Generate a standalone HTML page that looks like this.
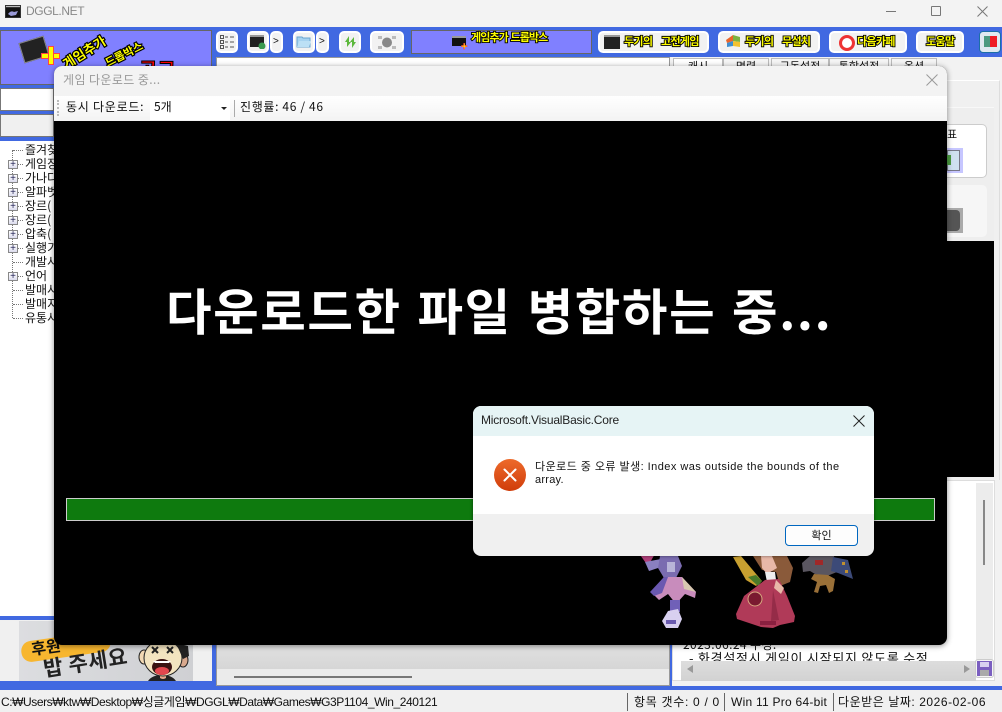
<!DOCTYPE html>
<html><head><meta charset="utf-8"><style>
*{box-sizing:border-box}
html,body{margin:0;padding:0;width:1002px;height:712px;overflow:hidden;background:#f0f0f0}
body{font-family:"Liberation Sans","Noto Sans CJK KR",sans-serif;font-size:12px;color:#111;position:relative}
.a{position:absolute}
.t{position:absolute;white-space:nowrap;line-height:1}
.btn{position:absolute;background:#f2f2f2;border:2px solid #fff;border-radius:5px;height:22px;top:31px}
.yl{position:absolute;white-space:nowrap;font-weight:bold;color:#ff0;font-size:11px;letter-spacing:-.7px;line-height:1;-webkit-text-stroke:1.8px #000;paint-order:stroke fill;font-family:"Noto Sans CJK KR",sans-serif}
.tr{position:absolute;left:25px;font-size:12px;line-height:14px;white-space:nowrap;font-family:"Noto Sans CJK KR",sans-serif}
.pl{position:absolute;left:8px;width:10px;height:9px;border:1px solid #888;background:linear-gradient(#fff,#dde);color:#225;font-size:10px;line-height:7px;text-align:center;font-family:"Liberation Sans"}
.dot{position:absolute;border-top:1px dotted #777;height:0}
.tab{position:absolute;top:58px;height:12px;background:#f4f4f4;border:1px solid #bbb;border-bottom:0;font-size:11px;text-align:center;line-height:14px;overflow:hidden;font-family:"Noto Sans CJK KR",sans-serif}
</style></head><body>
<!-- title bar -->
<div class="a" style="left:0;top:0;width:1002px;height:27px;background:#f3f3f3"></div>
<svg class="a" style="left:5px;top:5px" width="17" height="14"><rect width="16" height="13" fill="#333"/><rect x="1" y="3" width="14" height="9" fill="#111"/><path d="M3 9q3-4 6-2l4-1-2 4-5 1z" fill="#9a9ad8"/><rect x="1" y="1" width="14" height="1" fill="#bbb"/></svg>
<div class="t" style="left:26px;top:5px;font-size:12px;letter-spacing:-.4px;color:#888">DGGL.NET</div>
<div class="a" style="left:886px;top:11px;width:10px;height:1px;background:#777"></div>
<div class="a" style="left:931px;top:6px;width:10px;height:10px;border:1px solid #777;border-radius:1px"></div>
<svg class="a" style="left:977px;top:6px" width="11" height="11"><path d="M.5.5l10 10M10.5.5l-10 10" stroke="#777" fill="none"/></svg>
<!-- blue back -->
<div class="a" style="left:0;top:27px;width:1002px;height:30px;background:#4169e1"></div>
<div class="a" style="left:0;top:57px;width:216px;height:633px;background:#4169e1"></div>
<div class="a" style="left:0;top:686px;width:1002px;height:4px;background:#4169e1"></div>
<div class="a" style="left:670px;top:476px;width:2px;height:214px;background:#4169e1"></div>
<!-- logo -->
<div class="a" style="left:0;top:30px;width:212px;height:55px;background:#8080ff;border:1px solid #666;overflow:hidden">
 <div class="a" style="left:20px;top:8px;width:26px;height:21px;background:#222;border:1px solid #888;transform:rotate(-17deg)"></div>
 <div class="a" style="left:40px;top:22px;width:19px;height:6px;background:#ff0;border:1px solid #f44"></div>
 <div class="a" style="left:47px;top:15px;width:6px;height:19px;background:#ff0;border:1px solid #f44"></div>
 <div class="yl" style="left:59px;top:14px;font-size:13px;letter-spacing:0;-webkit-text-stroke:2.4px #000;transform:rotate(-32deg)">게임추가</div>
 <div class="yl" style="left:103px;top:18px;font-size:11px;letter-spacing:0;-webkit-text-stroke:2.4px #000;transform:rotate(-27deg)">드롭박스</div>
 <div class="t" style="left:138px;top:28px;font-size:20px;font-weight:bold;color:#f00;-webkit-text-stroke:1px #000;font-family:'Noto Sans CJK KR'">공구</div>
</div>
<div class="a" style="left:0;top:88px;width:54px;height:23px;background:#fff;border:1px solid #777"></div>
<div class="a" style="left:0;top:114px;width:54px;height:23px;background:#f0f0f0;border:1px solid #777"></div>
<!-- tree -->
<div class="a" style="left:0;top:141px;width:212px;height:475px;background:#fff"></div>
<div class="a" style="left:12px;top:150px;height:168px;border-left:1px dotted #777"></div>
<div class="tr" style="top:143px">즐겨찾</div><div class="tr" style="top:157px">게임장</div><div class="tr" style="top:171px">가나다</div><div class="tr" style="top:185px">알파벳</div><div class="tr" style="top:199px">장르(</div><div class="tr" style="top:213px">장르(</div><div class="tr" style="top:227px">압축(</div><div class="tr" style="top:241px">실행기</div><div class="tr" style="top:255px">개발사</div><div class="tr" style="top:269px">언어</div><div class="tr" style="top:283px">발매사</div><div class="tr" style="top:297px">발매지</div><div class="tr" style="top:311px">유통사</div>
<div class="dot" style="left:13px;top:150px;width:10px"></div><div class="dot" style="left:18px;top:164px;width:5px"></div><div class="dot" style="left:18px;top:178px;width:5px"></div><div class="dot" style="left:18px;top:192px;width:5px"></div><div class="dot" style="left:18px;top:206px;width:5px"></div><div class="dot" style="left:18px;top:220px;width:5px"></div><div class="dot" style="left:18px;top:234px;width:5px"></div><div class="dot" style="left:18px;top:248px;width:5px"></div><div class="dot" style="left:13px;top:262px;width:10px"></div><div class="dot" style="left:18px;top:276px;width:5px"></div><div class="dot" style="left:13px;top:290px;width:10px"></div><div class="dot" style="left:13px;top:304px;width:10px"></div><div class="dot" style="left:13px;top:318px;width:10px"></div>
<div class="pl" style="top:160px">+</div><div class="pl" style="top:174px">+</div><div class="pl" style="top:188px">+</div><div class="pl" style="top:202px">+</div><div class="pl" style="top:216px">+</div><div class="pl" style="top:230px">+</div><div class="pl" style="top:244px">+</div><div class="pl" style="top:272px">+</div>
<!-- banner -->
<div class="a" style="left:0;top:620px;width:212px;height:61px;background:#f0f0f0"></div>
<div class="a" style="left:19px;top:621px;width:174px;height:60px;background:linear-gradient(90deg,#dcdde0,#cfd0d3)"></div>
<div class="a" style="left:21px;top:636px;width:90px;height:21px;background:#f7b62f;border-radius:10px;transform:rotate(-8deg)"></div>
<div class="t" style="left:31px;top:638px;font-size:16px;font-weight:bold;color:#111;transform:rotate(-8deg);font-family:'Noto Sans CJK KR'">후원</div>
<div class="t" style="left:43px;top:652px;font-size:21px;font-weight:bold;letter-spacing:.6px;color:#222;transform:rotate(-9deg);font-family:'Noto Sans CJK KR'">밥 주세요</div>
<svg class="a" style="left:138px;top:640px" width="56" height="41"><path d="M10 41q4-6 14-6t14 6z" fill="#222"/><path d="M22 38q3 2 6 0v-4h-6z" fill="#e9a98c"/><ellipse cx="6" cy="17" rx="5" ry="7" fill="#f3d9b4" stroke="#222"/><ellipse cx="45" cy="20" rx="5" ry="7" fill="#d9a98e" stroke="#222"/><ellipse cx="25" cy="18" rx="19" ry="18" fill="#f3e4c0" stroke="#222"/><path d="M38 3l12 3 1 10-6 3z" fill="#222"/><ellipse cx="24" cy="27" rx="10" ry="8" fill="#3a1212"/><ellipse cx="24" cy="31" rx="7" ry="4" fill="#e2474e"/><path d="M15 21h18l-2 2H17z" fill="#fff"/><path d="M14 7l6 6m0-6l-6 6M29 7l6 6m0-6l-6 6" stroke="#222" stroke-width="2"/></svg>
<!-- toolbar buttons -->
<div class="btn" style="left:216px;width:22px"></div>
<svg class="a" style="left:220px;top:35px" width="15" height="14" fill="none" stroke="#555"><rect x=".5" y=".5" width="3" height="3"/><rect x=".5" y="5.5" width="3" height="3"/><rect x=".5" y="10.5" width="3" height="3"/><path d="M5 2h3m2 0h4M5 7h3m2 0h4M5 12h3m2 0h4"/></svg>
<div class="btn" style="left:247px;width:22px"></div>
<svg class="a" style="left:250px;top:35px" width="16" height="14"><rect width="14" height="12" fill="#222"/><rect y="0" width="14" height="2" fill="#999"/><circle cx="12" cy="11" r="3.5" fill="#3a9a50"/></svg>
<div class="btn" style="left:270px;width:13px"></div><div class="t" style="left:273px;top:37px;font-size:10px">&gt;</div>
<div class="btn" style="left:293px;width:22px"></div>
<svg class="a" style="left:296px;top:36px" width="16" height="12"><path d="M1 1h5l1 1h7v9H1z" fill="#a7d3f0" stroke="#6aa6d0"/><path d="M3 5h12l-2 6H1z" fill="#bce0f5"/></svg>
<div class="btn" style="left:316px;width:13px"></div><div class="t" style="left:319px;top:37px;font-size:10px">&gt;</div>
<div class="btn" style="left:339px;width:22px"></div>
<svg class="a" style="left:344px;top:35px" width="13" height="14"><path d="M5 1L1 7h2v5l4-5H5zM8 13l4-6h-2V2L6 7h2z" fill="#5cb83c"/></svg>
<div class="btn" style="left:370px;width:34px"></div>
<svg class="a" style="left:376px;top:34px" width="22" height="17"><circle cx="11" cy="8.5" r="5" fill="#888"/><path d="M2 2h4v3H2zM16 2h4v3h-4zM2 12h4v3H2zM16 12h4v3h-4z" fill="#bbb"/></svg>
<div class="a" style="left:411px;top:30px;width:181px;height:24px;background:#8080ff;border:1px solid #666"></div>
<div class="a" style="left:452px;top:36px;width:14px;height:10px;background:#111;border-top:2px solid #999"></div>
<div class="t" style="left:461px;top:42px;color:#ff0;font-weight:bold;font-size:11px;-webkit-text-stroke:.5px #f33">+</div>
<div class="yl" style="left:471px;top:32px;letter-spacing:-.9px;word-spacing:1px">게임추가 드롭박스</div>
<div class="btn" style="left:598px;width:111px"></div>
<div class="a" style="left:604px;top:35px;width:16px;height:14px;background:#222;border-top:2px solid #999"></div>
<div class="yl" style="left:624px;top:36px;word-spacing:7px">두기의 고전게임</div>
<div class="btn" style="left:718px;width:102px"></div>
<svg class="a" style="left:725px;top:34px" width="17" height="15"><path d="M1 6l7-5v6l-6 2z" fill="#e8652b"/><path d="M8 1l7 2v5l-7-1z" fill="#7cb342"/><path d="M2 9l6-2v5l-6 1z" fill="#3e8ed0"/><path d="M8 7l7 1v5l-7-1z" fill="#f2c230"/></svg>
<div class="yl" style="left:745px;top:36px;word-spacing:7px">두기의 무설치</div>
<div class="btn" style="left:829px;width:78px"></div>
<div class="a" style="left:839px;top:35px;width:16px;height:16px;border:3px solid #e33;border-radius:50%;background:#fff"></div>
<div class="yl" style="left:857px;top:36px">다음카페</div>
<div class="btn" style="left:916px;width:48px"></div>
<div class="yl" style="left:926px;top:36px">도움말</div>
<div class="a" style="left:979px;top:31px;width:22px;height:22px;background:#dfe9f0;border:1px solid #1b6fa8;border-radius:4px"></div>
<div class="a" style="left:984px;top:36px;width:6px;height:11px;background:#4b9a80"></div><div class="a" style="left:990px;top:36px;width:7px;height:11px;background:#ee1c25"></div>
<!-- middle -->
<div class="a" style="left:216px;top:57px;width:454px;height:629px;background:#e6e6e6;border:1px solid #999"></div>
<div class="a" style="left:217px;top:58px;width:452px;height:10px;background:#fff"></div>
<div class="a" style="left:217px;top:645px;width:452px;height:24px;background:linear-gradient(#e0e0e0,#d6d6d6)"></div>
<div class="a" style="left:217px;top:669px;width:452px;height:16px;background:#ebebeb"></div>
<div class="a" style="left:234px;top:676px;width:178px;height:2px;background:#777"></div>
<!-- right -->
<div class="a" style="left:672px;top:57px;width:330px;height:629px;background:#f2f2f2"></div>
<div class="tab" style="left:673px;width:50px;background:#fff">캐시</div><div class="tab" style="left:723px;width:46px">명령</div><div class="tab" style="left:771px;width:58px">구동설정</div><div class="tab" style="left:829px;width:60px">통합설정</div><div class="tab" style="left:891px;width:46px">옵션</div>
<div class="a" style="left:947px;top:80px;width:53px;height:400px;background:#f0f0f0;border-top:1px solid #fff;border-right:1px solid #ddd"></div>
<div class="a" style="left:947px;top:107px;width:47px;height:135px;background:#eee;border-top:1px solid #f8f8f8"></div>
<div class="a" style="left:947px;top:124px;width:40px;height:54px;background:#fff;border:1px solid #ccc;border-left:0;border-radius:0 5px 5px 0"></div>
<div class="t" style="left:947px;top:129px;font-size:11px;font-family:'Noto Sans CJK KR'">표</div>
<div class="a" style="left:947px;top:148px;width:16px;height:25px;background:#c6c6ff"></div>
<div class="a" style="left:947px;top:150px;width:13px;height:21px;background:#cfe0f0;border:1px solid #778"></div>
<div class="a" style="left:947px;top:155px;width:4px;height:10px;background:#4a9a40"></div>
<div class="a" style="left:947px;top:185px;width:40px;height:52px;background:#f6f6f6;border-radius:0 5px 5px 0"></div>
<div class="a" style="left:947px;top:208px;width:16px;height:25px;background:#aaa"></div>
<div class="a" style="left:947px;top:210px;width:13px;height:21px;background:#555;border-radius:0 4px 4px 0"></div>
<div class="a" style="left:947px;top:241px;width:47px;height:236px;background:#000"></div>
<div class="a" style="left:672px;top:480px;width:323px;height:201px;background:#fff;border:1px solid #ddd"></div>
<div class="a" style="left:976px;top:483px;width:17px;height:177px;background:#ececec"></div>
<div class="a" style="left:983px;top:500px;width:2px;height:65px;background:#888"></div>
<div class="t" style="left:683px;top:639px;font-size:12px;letter-spacing:.4px;font-family:'Noto Sans CJK KR'">2023.06.24 수정:</div>
<div class="t" style="left:689px;top:651px;font-size:13px;letter-spacing:.75px;font-family:'Noto Sans CJK KR'">- 화경설정시 게임이 시작되지 않도록 수정</div>
<div class="a" style="left:681px;top:661px;width:295px;height:20px;background:linear-gradient(#ddd,#d2d2d2)"></div>
<div class="a" style="left:687px;top:665px;border:solid transparent;border-width:4px 6px 4px 0;border-right-color:#999"></div>
<div class="a" style="left:964px;top:665px;border:solid transparent;border-width:4px 0 4px 6px;border-left-color:#999"></div>
<div class="a" style="left:975px;top:659px;width:19px;height:19px;background:#f5f5f5;border:1px solid #ccc;border-radius:3px"></div>
<svg class="a" style="left:977px;top:661px" width="15" height="15"><rect width="15" height="15" fill="#7b5fc0"/><rect x="3" y="1" width="9" height="5" fill="#d8d0f0"/><rect x="3" y="9" width="9" height="6" fill="#aaa"/></svg>
<!-- status -->
<div class="a" style="left:0;top:690px;width:1002px;height:22px;background:#f0f0f0"></div>
<div class="t" style="left:1px;top:696px;font-size:12px;letter-spacing:-.43px">C:₩Users₩ktw₩Desktop₩싱글게임₩DGGL₩Data₩Games₩G3P1104_Win_240121</div>
<div class="a" style="left:627px;top:693px;width:1px;height:18px;background:#666"></div>
<div class="t" style="left:634px;top:696px;letter-spacing:.7px">항목 갯수: 0 / 0</div>
<div class="a" style="left:724px;top:693px;width:1px;height:18px;background:#666"></div>
<div class="t" style="left:731px;top:696px;letter-spacing:.25px">Win 11 Pro 64-bit</div>
<div class="a" style="left:833px;top:693px;width:1px;height:18px;background:#666"></div>
<div class="t" style="left:838px;top:696px;letter-spacing:.55px">다운받은 날짜: 2026-02-06</div>
<!-- download dialog -->
<div class="a" style="left:54px;top:66px;width:893px;height:579px;border-radius:8px;overflow:hidden;background:#000;box-shadow:0 1px 6px rgba(0,0,0,.45)">
 <div class="a" style="left:0;top:0;width:893px;height:30px;background:#f3f3f3"></div>
 <div class="t" style="left:9px;top:8px;font-size:12px;letter-spacing:.4px;color:#999;font-family:'Noto Sans CJK KR'">게임 다운로드 중...</div>
 <svg class="a" style="left:872px;top:8px" width="12" height="12"><path d="M.5.5l11 11M11.5.5l-11 11" stroke="#999" fill="none"/></svg>
 <div class="a" style="left:0;top:30px;width:893px;height:25px;background:linear-gradient(#fff,#f3f3f3)"></div>
 <div class="a" style="left:3px;top:34px;height:16px;border-left:2px dotted #bbb"></div>
 <div class="t" style="left:12px;top:35px;font-size:12px;letter-spacing:.75px;font-family:'Noto Sans CJK KR'">동시 다운로드:</div>
 <div class="a" style="left:96px;top:31px;width:80px;height:23px;background:#fff"></div>
 <div class="t" style="left:100px;top:35px;font-size:12px;font-family:'Noto Sans CJK KR'">5개</div>
 <div class="a" style="left:167px;top:41px;border:solid transparent;border-width:3px 3px 0;border-top-color:#222"></div>
 <div class="a" style="left:180px;top:34px;width:1px;height:17px;background:#aaa"></div>
 <div class="t" style="left:186px;top:35px;font-size:12px;letter-spacing:.65px;font-family:'Noto Sans CJK KR'">진행률: 46 / 46</div>
 <div class="t" style="left:112px;top:219px;font-size:49.5px;font-weight:bold;color:#fff;letter-spacing:1.6px;word-spacing:3px;font-family:'Noto Sans CJK KR'">다운로드한 파일 병합하는 중...</div>
 <div class="a" style="left:12px;top:432px;width:869px;height:23px;background:#0e7a0e;border:1px solid #ccc"></div>
 <!-- sprites: absolute page coordinates -->
 <svg class="a" style="left:-54px;top:-66px" width="1002" height="712" viewBox="0 0 1002 712">
  <path d="M638 552l10 14 8-14z" fill="#b0407a"/>
  <path d="M645 562l16-3v8l-12 4z" fill="#8a80c0"/>
  <path d="M660 556h18l4 10-6 12h-12l-6-10z" fill="#7a6cb0"/><path d="M667 562h8v10h-8z" fill="#b8b4d8"/>
  <path d="M664 577h18l14 15-1 6-10-4-9 10-8-10-9 6-8-8z" fill="#c88cbc"/><path d="M664 577h4l-6 16-8 3-4-4z" fill="#6a58b0"/><path d="M682 577l14 15-12-3z" fill="#d8c8b0"/>
  <path d="M670 600h10v12h-10z" fill="#7060b8"/>
  <path d="M668 611l10-2 4 10-4 9h-12l-4-7z" fill="#d8d0f0"/><path d="M666 620h10v4h-10z" fill="#6a5ab0"/>
  <path d="M733 557l8-1 21 25-6 5-10-6z" fill="#c8a030"/><path d="M748 577l8-2 6 6-4 5z" fill="#4a7a2a"/>
  <path d="M753 556h34l6 12-3 14-10 4-4-14-14-2z" fill="#8a5a3a"/><path d="M761 556h11l5 12-10 6-5-6z" fill="#e8b8a8"/><path d="M765 572h10l1 8-9 2z" fill="#eee"/>
  <path d="M765 580l14-1 8 17 8 20-1 6-14 3-7 3-12-1-9-3-15-5-1-5 8-18z" fill="#b03a58"/><path d="M773 590l6 30-8 1z" fill="#952c48"/><path d="M760 621h16v4h-16z" fill="#8a2040"/>
  <circle cx="755" cy="599" r="7" fill="#7a1a30" stroke="#d8a880"/><path d="M776 580l8 8-3 6-7-6z" fill="#e8b8a8"/>
  <path d="M802 563l8-7h24l3 16-10 4-12-2-5-3-7 1z" fill="#5a5660"/><path d="M815 560h8v5h-8z" fill="#a02828"/>
  <path d="M833 557l15 3 5 19-15-6-7-2z" fill="#3c4a78"/><path d="M842 562h3v3h-3zM845 570h3v3h-3z" fill="#c09030"/>
  <path d="M814 574l14 1 7 4-2 12-4 2-3-8-6 1-2 7-4-1 3-10-6-3z" fill="#9a7038"/>
 </svg>
</div>
<!-- message box -->
<div class="a" style="left:473px;top:406px;width:401px;height:150px;border-radius:8px;overflow:hidden;background:#f0f0f0;box-shadow:0 0 3px rgba(0,0,0,.5)">
 <div class="a" style="left:0;top:0;width:401px;height:30px;background:#e6f4f5"></div>
 <div class="t" style="left:8px;top:8px;font-size:12px;letter-spacing:-.2px;color:#222">Microsoft.VisualBasic.Core</div>
 <svg class="a" style="left:380px;top:9px" width="12" height="12"><path d="M.5.5l11 11M11.5.5l-11 11" stroke="#222" fill="none"/></svg>
 <div class="a" style="left:0;top:30px;width:401px;height:78px;background:#fff"></div>
 <svg class="a" style="left:21px;top:53px" width="32" height="32"><defs><linearGradient id="g" x1="0" y1="0" x2="0" y2="1"><stop offset="0" stop-color="#ed6a2b"/><stop offset="1" stop-color="#d03d0a"/></linearGradient></defs><circle cx="16" cy="16" r="16" fill="url(#g)"/><path d="M10.5 10.5l11 11M21.5 10.5l-11 11" stroke="#fff" stroke-width="2" stroke-linecap="round"/></svg>
 <div class="t" style="left:62px;top:56px;font-size:11px;letter-spacing:.45px;font-family:'Liberation Sans','Noto Sans CJK KR'">다운로드 중 오류 발생: Index was outside the bounds of the</div>
 <div class="t" style="left:62px;top:69px;font-size:11px;letter-spacing:.25px">array.</div>
 <div class="a" style="left:312px;top:119px;width:73px;height:21px;background:#fdfdfd;border:1px solid #0067c0;border-radius:4px;text-align:center;font-size:11px;line-height:18px;font-family:'Noto Sans CJK KR'">확인</div>
</div>
</body></html>
